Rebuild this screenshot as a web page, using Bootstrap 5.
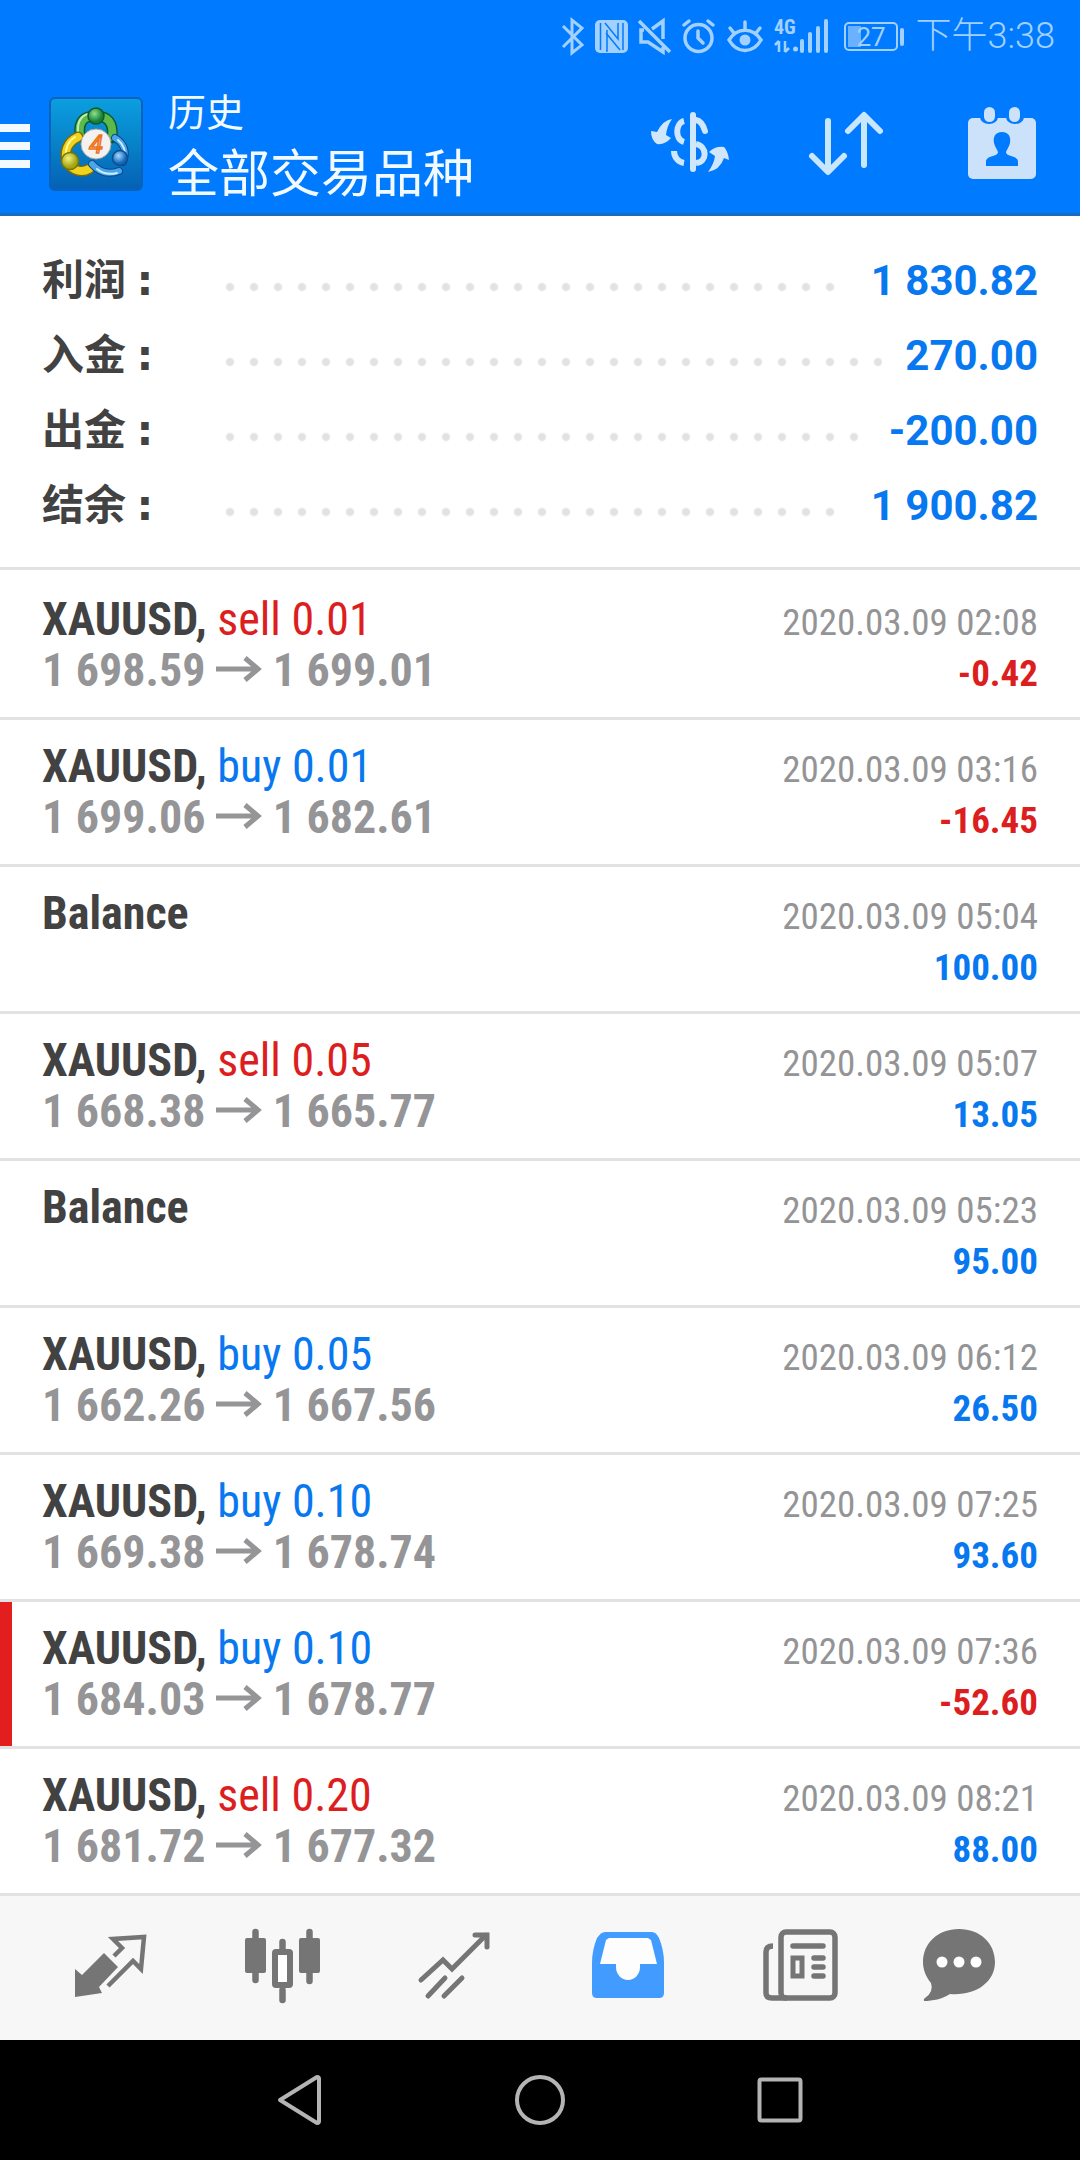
<!DOCTYPE html>
<html lang="zh-CN">
<head>
<meta charset="utf-8">
<meta name="viewport" content="width=device-width, initial-scale=1">
<title>历史</title>
<link href="https://cdn.jsdelivr.net/npm/bootstrap@5.3.0/dist/css/bootstrap.min.css" rel="stylesheet">
<style>
:root{--brand:#007aff;--up:#0878f0;--down:#dc1e20;--rule:#e2e2e2;--muted:#949496;--ink:#424242}
body{font-family:Roboto,"Noto Sans CJK SC",sans-serif;color:var(--ink);background:#fff}
svg{display:block;flex:none}
.app-header{background:var(--brand);border-bottom:3px solid #1a6cc0}
.status{height:72px;color:#a3d1ff;padding-right:25px}
.clock{font-size:36px;line-height:40px;font-weight:300;padding-left:6px}
.toolbar{height:141px}
.titles{color:#f2faff;padding:12px 0 0 24px}
.titles small{display:block;font-size:38px;line-height:48px;margin-bottom:4px}
.titles h1{font-size:51px;line-height:68px;font-weight:400}
.icon-btn{background:none;border:0;padding:0;color:inherit}
.summary{padding:27px 42px 24px;border-bottom:3px solid var(--rule);margin-bottom:3px;font-size:42px;line-height:75px;font-weight:700}
.summary dt{width:176px;height:75px;font-weight:700}
.summary dt span{font-family:"DejaVu Sans",sans-serif}
.summary dd{color:var(--up)}
.leader{height:75px;margin-right:23px;background:radial-gradient(circle at 12px 44px,#e2e2e2 3px,transparent 5px) 0 0/24px 75px repeat-x}
.deal{font-family:"Roboto Condensed",Roboto,sans-serif;font-size:46px;line-height:51px;min-height:147px;padding:21px 42px 0;border-bottom:3px solid var(--rule)}
.deal b{font-weight:700}
.deal .price{color:#959597;font-weight:700}
.deal .price svg{display:inline-block;vertical-align:baseline}
.deal .side{font-size:37px;color:var(--muted)}
.deal .side b{display:block}
.deal .buy,.deal .gain{color:var(--up)}
.deal .sell,.deal .loss{color:var(--down)}
.flagged{box-shadow:inset 12px 0 #e21e1e}
.tabs{background:#f7f7f7;padding:0 22px 0 25px;height:144px;color:#757575}
.tabs .active{color:#429bff}
.sysnav{background:#000;height:120px;padding:0 16.6%;color:#b4b4b4}
</style>
</head>
<body>
<header class="app-header">
  <div class="status d-flex justify-content-end align-items-center">
    <svg width="42" height="72" viewBox="550 0 42 72" fill="none" stroke="currentColor" stroke-width="3"><path d="M563 26l19 19-10 8V20l10 8-19 19"/></svg>
    <svg width="40" height="72" viewBox="592 0 40 72"><rect x="595" y="20" width="33" height="33" rx="5" fill="currentColor"/><path d="M600.500 23v27M607 30v21l-1 0M605 23l13 16V23M606 33l14 17M623 23v27" stroke="#007aff" stroke-width="1.500" fill="none"/></svg>
    <svg width="44" height="72" viewBox="632 0 44 72" fill="none" stroke="currentColor" stroke-width="3.500"><path d="M652 29l11-8v18M644 30h-3v12h7l15 10v-5M639 21l31 31"/></svg>
    <svg width="44" height="72" viewBox="676 0 44 72" fill="none" stroke="currentColor" stroke-width="3.500" stroke-linecap="round"><circle cx="698.500" cy="38" r="13.500"/><path d="M698 31v7l5 5M684 25l5-4M713 25l-5-4"/></svg>
    <svg width="48" height="72" viewBox="720 0 48 72" fill="none" stroke="currentColor" stroke-width="3.500" stroke-linecap="round"><path d="M729 40c8-13 24-13 32 0c-8 14-24 14-32 0zM745 22v6M730 28l4 5M760 28l-4 5"/><circle cx="745" cy="40" r="5.500" fill="currentColor" stroke="none"/></svg>
    <svg width="66" height="72" viewBox="768 0 66 72" fill="currentColor"><text x="774" y="34" font-family="Roboto Condensed,Roboto,sans-serif" font-weight="700" font-size="20">4G</text><path d="M779 41v11M775 45l4-4M785 41v11M789 48l-4 4" stroke="currentColor" stroke-width="2.500"/><circle cx="795.500" cy="49" r="2.500"/><rect x="800" y="39" width="4" height="14" rx="2"/><rect x="808" y="32" width="4" height="21" rx="2"/><rect x="816" y="26" width="4" height="27" rx="2"/><rect x="824" y="19" width="4" height="34" rx="2"/></svg>
    <svg width="76" height="72" viewBox="834 0 76 72" fill="none" stroke="currentColor" stroke-width="2"><rect x="845" y="23" width="52" height="27" rx="4"/><rect x="848" y="26" width="13" height="21" fill="currentColor" stroke="none" opacity=".65"/><path d="M902 30v14" stroke-width="4" stroke-linecap="round"/><text x="871" y="46" text-anchor="middle" font-family="Roboto,sans-serif" font-size="26" fill="currentColor" stroke="none">27</text></svg>
    <span class="clock">下午3:38</span>
  </div>
  <div class="toolbar d-flex align-items-center">
    <button class="icon-btn" type="button" aria-label="菜单"><svg width="48" height="141" viewBox="0 72 48 141" fill="#f2faff"><path d="M0 124h30v8H0zM0 142h30v8H0zM0 160h30v8H0z"/></svg></button>
    <svg width="96" height="141" viewBox="48 72 96 141" role="img" aria-label="MetaTrader 4">
      <defs>
        <linearGradient id="tile" x1="0" y1="0" x2="0" y2="1"><stop offset="0" stop-color="#0b9fe0"/><stop offset=".5" stop-color="#0782c8"/><stop offset="1" stop-color="#0560b4"/></linearGradient>
        <radialGradient id="gr" cx=".4" cy=".35"><stop offset="0" stop-color="#8fe08a"/><stop offset="1" stop-color="#15803a"/></radialGradient>
        <radialGradient id="ye" cx=".4" cy=".35"><stop offset="0" stop-color="#f3f27c"/><stop offset="1" stop-color="#a3a512"/></radialGradient>
        <radialGradient id="bl" cx=".4" cy=".35"><stop offset="0" stop-color="#a6dcff"/><stop offset="1" stop-color="#1267b8"/></radialGradient>
      </defs>
      <rect x="50" y="98" width="92" height="92" rx="5" fill="url(#tile)" stroke="#0a62bd" stroke-width="2"/>
      <g fill="none" stroke-linecap="round">
        <path d="M80 136c-2-16 5-20 16-20s18 6 16 22" stroke="#0b5a2c" stroke-width="11"/><path d="M80 135c-2-15 5-19 16-19s18 6 16 21" stroke="#5cba4c" stroke-width="8"/><path d="M78 132c-1-13 6-18 14-19" stroke="#c5ecb4" stroke-width="2"/>
        <path d="M78 137c-11 5-15 16-10 26c5 8 14 10 21 6" stroke="#7c6a08" stroke-width="11"/><path d="M78 137c-11 5-15 16-10 26c5 8 14 10 21 6" stroke="#f0d31c" stroke-width="8"/><path d="M75 137c-7 4-10 12-9 19" stroke="#fff8a0" stroke-width="2"/>
        <path d="M115 138c9 5 12 14 8 24M92 164c7 8 16 11 27 7" stroke="#0a4a90" stroke-width="8"/><path d="M115 138c9 5 12 14 8 24M92 164c7 8 16 11 27 7" stroke="#4ba6e8" stroke-width="6"/><path d="M118 140c6 5 8 11 6 18M97 169c6 5 12 6 20 4" stroke="#cdeeff" stroke-width="2"/>
      </g>
      <circle cx="96" cy="116" r="8" fill="url(#gr)" stroke="#0e5a2a" stroke-width="1.500"/>
      <circle cx="70" cy="161" r="8.500" fill="url(#ye)" stroke="#777308" stroke-width="1.500"/>
      <circle cx="120" cy="158" r="7.500" fill="url(#bl)" stroke="#0d4d91" stroke-width="1.500"/>
      <circle cx="96" cy="144" r="15" fill="#f4f2f0" stroke="#b0a898"/>
      <text x="96" y="153" text-anchor="middle" font-family="Roboto,sans-serif" font-size="25" font-style="italic" fill="#fbe0c0" stroke="#ee7320" stroke-width="1.500">4</text>
    </svg>
    <div class="titles me-auto">
      <small>历史</small>
      <h1 class="m-0">全部交易品种</h1>
    </div>
    <button class="icon-btn" type="button" aria-label="交易品种"><svg width="156" height="141" viewBox="612 72 156 141" fill="none" stroke="#cfe6fb" stroke-width="6"><path d="M693 115v54" stroke-linecap="round"/><path d="M684 121c-8 2-10 18 0 21M674 151c0 6 4 11 10 12"/><path d="M696 120q6 1 9 11" stroke-linecap="round"/><path d="M696 144c11 2 12 18 0 19"/><path d="M672 119q-9 1-15 13l-6-1q0 9 6 13q8 1 14-6l-5-3q1-9 6-16zM708 172q12-2 16-14l5 2q-1-9-5-13q-9-1-15 5l6 4q-1 8-7 16z" fill="#cfe6fb" stroke="none"/></svg></button>
    <button class="icon-btn" type="button" aria-label="排序"><svg width="156" height="141" viewBox="612 72 156 141" fill="none" stroke="#c8e6fc" stroke-width="6" stroke-linecap="round" stroke-linejoin="round"><path d="M672 121v50M656 156l16 16 16-16M708 165v-49M692 131l16-16 16 16"/></svg></button>
    <button class="icon-btn" type="button" aria-label="日期"><svg width="156" height="141" viewBox="924 72 156 141" fill="#cce2fb"><rect x="968" y="118" width="68" height="61" rx="5"/><path d="M980 116v1a9 7 0 0 0 18 0v-1zM1006 116v1a9 7 0 0 0 18 0v-1z" fill="#007aff"/><rect x="984" y="107" width="11" height="15" rx="5.500"/><rect x="1009" y="107" width="11" height="15" rx="5.500"/><path d="M1002 132c-7 0-9 5-8 11c1 4 3 6 4 9c0 5-12 3-12 10v4h32v-4c0-7-12-5-12-10c1-3 3-5 4-9c1-6-1-11-8-11z" fill="#007aff"/></svg></button>
  </div>
</header>
<main>
  <dl class="summary mt-0">
    <div class="d-flex"><dt>利润 <span>:</span></dt><div class="leader flex-fill"></div><dd class="m-0">1 830.82</dd></div>
    <div class="d-flex"><dt>入金 <span>:</span></dt><div class="leader flex-fill"></div><dd class="m-0">270.00</dd></div>
    <div class="d-flex"><dt>出金 <span>:</span></dt><div class="leader flex-fill"></div><dd class="m-0">-200.00</dd></div>
    <div class="d-flex"><dt>结余 <span>:</span></dt><div class="leader flex-fill"></div><dd class="m-0">1 900.82</dd></div>
  </dl>
  <svg width="0" height="0" class="position-absolute"><symbol id="to" viewBox="0 0 46 30"><path d="M0 13h42M29 2l13 11-13 11" fill="none" stroke="currentColor" stroke-width="5"/></symbol></svg>
  <ul class="list-unstyled m-0">
    <li class="deal d-flex justify-content-between align-items-baseline"><div><div><b>XAUUSD,</b> <span class="sell">sell 0.01</span></div><div class="price">1 698.59 <svg width="46" height="30" role="img" aria-label="→"><use href="#to"/></svg> 1 699.01</div></div><div class="side text-end"><time>2020.03.09 02:08</time><b class="loss">-0.42</b></div></li>
    <li class="deal d-flex justify-content-between align-items-baseline"><div><div><b>XAUUSD,</b> <span class="buy">buy 0.01</span></div><div class="price">1 699.06 <svg width="46" height="30" role="img" aria-label="→"><use href="#to"/></svg> 1 682.61</div></div><div class="side text-end"><time>2020.03.09 03:16</time><b class="loss">-16.45</b></div></li>
    <li class="deal d-flex justify-content-between align-items-baseline"><div><b>Balance</b></div><div class="side text-end"><time>2020.03.09 05:04</time><b class="gain">100.00</b></div></li>
    <li class="deal d-flex justify-content-between align-items-baseline"><div><div><b>XAUUSD,</b> <span class="sell">sell 0.05</span></div><div class="price">1 668.38 <svg width="46" height="30" role="img" aria-label="→"><use href="#to"/></svg> 1 665.77</div></div><div class="side text-end"><time>2020.03.09 05:07</time><b class="gain">13.05</b></div></li>
    <li class="deal d-flex justify-content-between align-items-baseline"><div><b>Balance</b></div><div class="side text-end"><time>2020.03.09 05:23</time><b class="gain">95.00</b></div></li>
    <li class="deal d-flex justify-content-between align-items-baseline"><div><div><b>XAUUSD,</b> <span class="buy">buy 0.05</span></div><div class="price">1 662.26 <svg width="46" height="30" role="img" aria-label="→"><use href="#to"/></svg> 1 667.56</div></div><div class="side text-end"><time>2020.03.09 06:12</time><b class="gain">26.50</b></div></li>
    <li class="deal d-flex justify-content-between align-items-baseline"><div><div><b>XAUUSD,</b> <span class="buy">buy 0.10</span></div><div class="price">1 669.38 <svg width="46" height="30" role="img" aria-label="→"><use href="#to"/></svg> 1 678.74</div></div><div class="side text-end"><time>2020.03.09 07:25</time><b class="gain">93.60</b></div></li>
    <li class="deal flagged d-flex justify-content-between align-items-baseline"><div><div><b>XAUUSD,</b> <span class="buy">buy 0.10</span></div><div class="price">1 684.03 <svg width="46" height="30" role="img" aria-label="→"><use href="#to"/></svg> 1 678.77</div></div><div class="side text-end"><time>2020.03.09 07:36</time><b class="loss">-52.60</b></div></li>
    <li class="deal d-flex justify-content-between align-items-baseline"><div><div><b>XAUUSD,</b> <span class="sell">sell 0.20</span></div><div class="price">1 681.72 <svg width="46" height="30" role="img" aria-label="→"><use href="#to"/></svg> 1 677.32</div></div><div class="side text-end"><time>2020.03.09 08:21</time><b class="gain">88.00</b></div></li>
  </ul>
</main>
<nav class="tabs d-flex align-items-center" aria-label="主导航">
  <button class="icon-btn flex-fill d-flex justify-content-center" type="button" aria-label="行情"><svg width="120" height="144" viewBox="50 1896 120 144" fill="none" stroke="currentColor" stroke-width="4.500"><path d="M103 1953l14 14-19 20 3 6-27 4v-28l7 6z" fill="currentColor" stroke="none"/><path d="M113 1956l8-8-9-9 31-2-3 32-8-8-25 25"/></svg></button>
  <button class="icon-btn flex-fill d-flex justify-content-center" type="button" aria-label="图表"><svg width="120" height="144" viewBox="222 1896 120 144" fill="currentColor" stroke="currentColor" stroke-linecap="round"><path d="M254.500 1932v48M308.500 1932v49M281.500 1942v8M281.500 1990v10" stroke-width="6.500"/><rect x="244" y="1938" width="21" height="35" rx="2" stroke="none"/><rect x="298" y="1938" width="21" height="35" rx="2" stroke="none"/><rect x="274" y="1952" width="15" height="33" rx="1" fill="#fff" stroke-width="6"/></svg></button>
  <button class="icon-btn flex-fill d-flex justify-content-center" type="button" aria-label="交易"><svg width="120" height="144" viewBox="394 1896 120 144" fill="none" stroke="currentColor" stroke-width="5" stroke-linecap="round"><path d="M420 1980l22-20 9 9 34-34M474 1935h12v12M427 1996l17-18M443 1996l18-18"/></svg></button>
  <button class="icon-btn active flex-fill d-flex justify-content-center" type="button" aria-label="历史"><svg width="120" height="144" viewBox="567 1896 120 144"><path d="M604 1932h47q4 0 7 6q5 12 5 25v30q0 5-5 5h-62q-5 0-5-5v-30q0-13 5-25q4-6 8-6z" fill="currentColor"/><path d="M608 1938h39l3 2 6 24h-17v3a12 13 0 0 1-24 0v-3h-16l6-24z" fill="#fdfdfd"/></svg></button>
  <button class="icon-btn flex-fill d-flex justify-content-center" type="button" aria-label="新闻"><svg width="120" height="144" viewBox="740 1896 120 144" fill="none" stroke="currentColor" stroke-width="5.500"><path d="M773 1946q-7 0-7 6v41q0 5 6 5h15"/><rect x="781" y="1932" width="54" height="66" rx="5"/><path d="M793 1946h30M814 1958h9M814 1967h9M814 1976h9" stroke-linecap="round"/><rect x="793" y="1958" width="9" height="18" stroke-width="5"/></svg></button>
  <button class="icon-btn flex-fill d-flex justify-content-center" type="button" aria-label="消息"><svg width="120" height="144" viewBox="911 1896 120 144" fill="currentColor"><path d="M958 1929c21 0 36 14 36 33c0 20-19 34-45 32c-8 5-17 7-26 7q-1-2 1-3q9-6 6-15c-5-6-8-13-8-21c0-19 15-33 36-33z"/><g fill="#fff"><circle cx="941" cy="1962" r="5.500"/><circle cx="958" cy="1962" r="5.500"/><circle cx="975" cy="1962" r="5.500"/></g></svg></button>
</nav>
<nav class="sysnav d-flex align-items-center" aria-label="系统">
  <button class="icon-btn flex-fill d-flex justify-content-center" type="button" aria-label="返回"><svg width="60" height="60" viewBox="270 2070 60 60" fill="none" stroke="#b4b4b4" stroke-width="4" stroke-linejoin="round"><path d="M280 2100l37-23q2 0 2 2v42q0 2-2 2z"/></svg></button>
  <button class="icon-btn flex-fill d-flex justify-content-center" type="button" aria-label="主页"><svg width="60" height="60" viewBox="0 0 60 60" fill="none" stroke="#b4b4b4" stroke-width="4"><circle cx="30" cy="30" r="23"/></svg></button>
  <button class="icon-btn flex-fill d-flex justify-content-center" type="button" aria-label="最近任务"><svg width="60" height="60" viewBox="0 0 60 60" fill="none" stroke="#b4b4b4" stroke-width="4"><rect x="9.500" y="9.500" width="41" height="41" rx="2"/></svg></button>
</nav>
<script src="https://cdn.jsdelivr.net/npm/bootstrap@5.3.0/dist/js/bootstrap.bundle.min.js"></script>
</body>
</html>
